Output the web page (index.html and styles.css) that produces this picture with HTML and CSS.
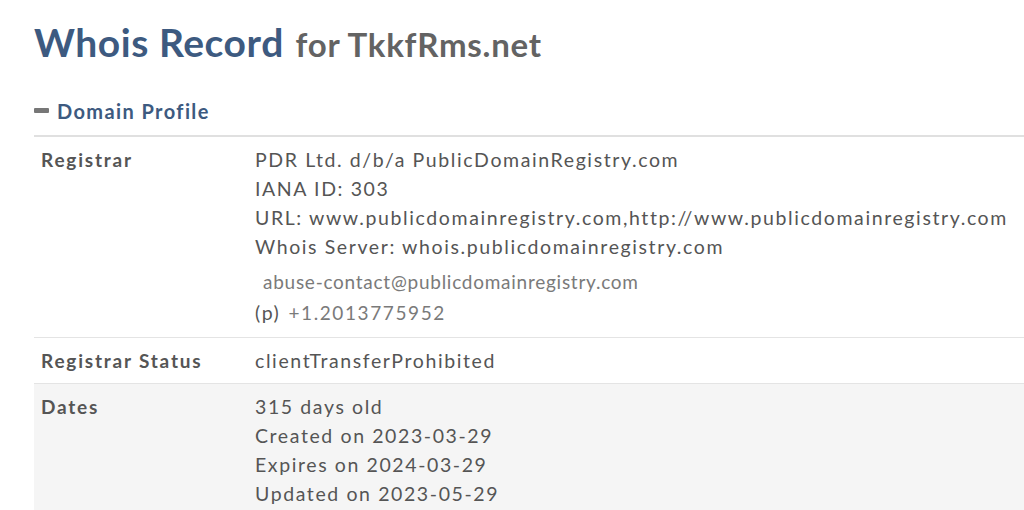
FILE: index.html
```html
<!DOCTYPE html>
<html>
<head>
<meta charset="utf-8">
<link rel="stylesheet" href="styles.css">
</head>
<body>
<div class="page">
  <h1 class="title"><span class="title-main">Whois Record</span> <span class="title-sub">for TkkfRms.net</span></h1>
  <h2 class="section"><span class="minus"></span>Domain Profile</h2>
  <div class="table">
    <div class="row first">
      <div class="label">Registrar</div>
      <div class="value">
        <div class="line">PDR Ltd. d/b/a PublicDomainRegistry.com</div>
        <div class="line">IANA ID: 303</div>
        <div class="line">URL: www.publicdomainregistry.com,http://www.publicdomainregistry.com</div>
        <div class="line">Whois Server: whois.publicdomainregistry.com</div>
        <div class="line email">abuse-contact@publicdomainregistry.com</div>
        <div class="line phone"><span class="p">(p)</span><span class="img-text">+1.2013775952</span></div>
      </div>
    </div>
    <div class="row">
      <div class="label">Registrar Status</div>
      <div class="value">
        <div class="line">clientTransferProhibited</div>
      </div>
    </div>
    <div class="row shaded">
      <div class="label">Dates</div>
      <div class="value">
        <div class="line">315 days old</div>
        <div class="line">Created on 2023-03-29</div>
        <div class="line">Expires on 2024-03-29</div>
        <div class="line">Updated on 2023-05-29</div>
      </div>
    </div>
  </div>
</div>
</body>
</html>
```
FILE: styles.css
```css
html, body {
  margin: 0;
  padding: 0;
  background: #fff;
  overflow: hidden;
}
body {
  font-family: Lato, "Open Sans", sans-serif;
  color: #555;
}
.page {
  padding-left: 34px;
}
.title {
  margin: 0;
  padding-top: 18px;
  height: 50px;
  line-height: 48px;
  font-weight: 700;
  white-space: nowrap;
}
.title-main {
  font-size: 39px;
  color: #3d5a80;
  letter-spacing: 0.55px;
}
.title-sub {
  font-size: 33px;
  color: #636363;
  letter-spacing: 0.75px;
  margin-left: 4px;
}
.section {
  margin: 0;
  padding: 31px 0 12px 0;
  display: flex;
  align-items: center;
  font-size: 20px;
  font-weight: 700;
  color: #3d5a80;
  letter-spacing: 1.4px;
  line-height: 24px;
}
.minus {
  display: inline-block;
  width: 15px;
  height: 5px;
  border-radius: 1px;
  background: #777;
  margin-right: 8px;
  margin-top: -2px;
}
.table {
  border-top: 2px solid #e0e0e0;
}
.row {
  display: flex;
  border-bottom: 1px solid #e4e4e4;
  padding: 8px 0;
}
.row.first {
  padding-bottom: 10px;
}
.row.shaded {
  background: #f5f5f5;
  border-bottom: none;
}
.label {
  width: 221px;
  padding-left: 7px;
  box-sizing: border-box;
  flex: none;
  font-weight: 700;
  font-size: 19px;
  line-height: 29px;
  letter-spacing: 1.8px;
  color: #555;
}
.value {
  font-size: 19.5px;
  line-height: 29px;
  letter-spacing: 1.6px;
  color: #555;
  white-space: nowrap;
}
.email {
  font-size: 19px;
  letter-spacing: 0.74px;
  color: #7a7a7a;
  padding-left: 8px;
  line-height: 33px;
  padding-top: 4px;
}
.p {
  color: #555;
  margin-right: 8px;
}
.img-text {
  font-size: 19px;
  letter-spacing: 1.6px;
  color: #7a7a7a;
}
```
